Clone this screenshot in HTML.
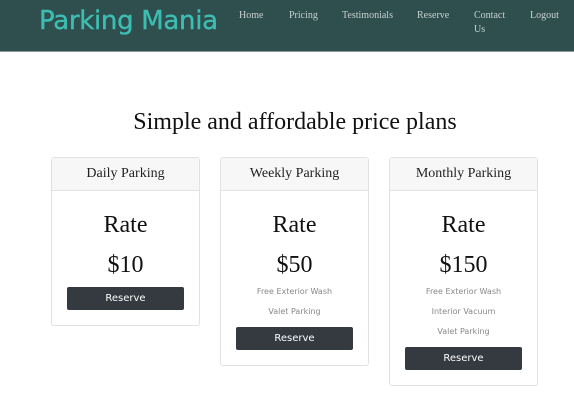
<!DOCTYPE html>
<html><head><meta charset="utf-8"><style>
*{margin:0;padding:0;box-sizing:border-box}
body{width:574px;height:401px;background:#fff;position:relative;overflow:hidden;font-family:"Liberation Serif",serif}
.hdr{position:absolute;left:0;top:0;width:574px;height:52px;background:#2f4f4f;border-bottom:1px solid #8a9a9a}
.logo{position:absolute;left:39px;top:6px;font-family:"DejaVu Sans","Liberation Sans",sans-serif;font-size:26px;color:#3dbdb1;letter-spacing:-0.3px;-webkit-text-stroke:0.4px #3dbdb1}
.nav{position:absolute;top:9px;font-size:10px;color:#c8d0d0;line-height:14px}
h1{position:absolute;top:109px;left:0;width:590px;text-align:center;font-weight:normal;font-size:24px;color:#111}
.card{position:absolute;top:157px;width:149px;border:1px solid #e2e2e2;border-radius:3px;text-align:center}
.ch{height:33px;background:#f7f7f7;border-bottom:1px solid #e2e2e2;font-size:14px;line-height:31px;color:#222}
.rate{font-size:24px;margin-top:19px;line-height:30px;color:#111}
.price{font-size:24px;margin-top:10px;line-height:30px;color:#111}
.f{font-family:"DejaVu Sans",sans-serif;font-size:8px;color:#888;line-height:20px}
.btn{margin:5px auto 0;width:117px;height:23px;background:#343a40;border-radius:2px;color:#fff;font-family:"DejaVu Sans",sans-serif;font-size:10px;line-height:23px}
</style></head><body>
<div class="hdr">
<div class="logo">Parking Mania</div>
<div class="nav" style="left:239px">Home</div>
<div class="nav" style="left:289px">Pricing</div>
<div class="nav" style="left:342px">Testimonials</div>
<div class="nav" style="left:417px">Reserve</div>
<div class="nav" style="left:474px">Contact<br>Us</div>
<div class="nav" style="left:530px">Logout</div>
</div>
<h1>Simple and affordable price plans</h1>
<div class="card" style="left:51px;height:169px"><div class="ch">Daily Parking</div><div class="rate">Rate</div><div class="price">$10</div><div class="btn" style="margin-top:7px">Reserve</div></div>
<div class="card" style="left:220px;height:209px"><div class="ch">Weekly Parking</div><div class="rate">Rate</div><div class="price">$50</div><div class="f" style="margin-top:2px">Free Exterior Wash</div><div class="f">Valet Parking</div><div class="btn">Reserve</div></div>
<div class="card" style="left:389px;height:229px"><div class="ch">Monthly Parking</div><div class="rate">Rate</div><div class="price">$150</div><div class="f" style="margin-top:2px">Free Exterior Wash</div><div class="f">Interior Vacuum</div><div class="f">Valet Parking</div><div class="btn">Reserve</div></div>
</body></html>
